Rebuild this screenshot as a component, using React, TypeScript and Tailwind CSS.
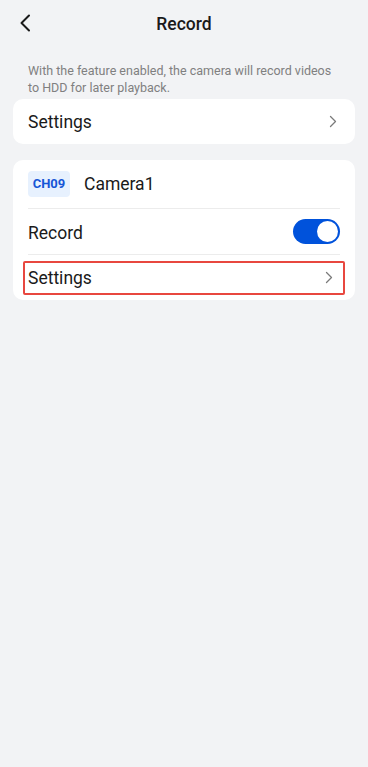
export default function App() {
  return (
    <div
      className="min-h-screen bg-[#f2f3f5] text-[#1a1a1a]"
      style={{ fontFamily: "Roboto, 'Noto Sans', sans-serif" }}
    >
      <div className="relative flex h-[46px] items-center justify-center pt-[3px]">
        <button className="absolute left-[18px] top-[14px] flex h-[18px] w-[14px] items-center justify-center">
          <svg width="12" height="18" viewBox="0 0 12 18" fill="none">
            <path d="M10 1.5 L2.5 9 L10 16.5" stroke="#1a1a1a" strokeWidth="2" strokeLinecap="round" strokeLinejoin="round" />
          </svg>
        </button>
        <h1 className="text-[17.5px] font-medium">Record</h1>
      </div>

      <p className="px-[28px] pt-[17px] text-[12.5px] leading-[16.5px] text-[#808080]">
        With the feature enabled, the camera will record videos to HDD for later playback.
      </p>

      <div className="mx-[13px] mt-[3px] flex h-[45px] items-center justify-between rounded-[10px] bg-white pl-[15px] pr-[18px]">
        <span className="pt-[2px] text-[17.5px]">Settings</span>
        <Chevron />
      </div>

      <div className="mx-[13px] mt-[16px] rounded-[10px] bg-white px-[15px]">
        <div className="flex h-[49px] items-center gap-[14px] border-b border-[#ececec]">
          <span className="flex h-[26px] w-[42px] items-center justify-center rounded-[4px] bg-[#e7f1fe] text-[13px] font-bold text-[#1656d6]">
            CH09
          </span>
          <span className="pt-[1px] text-[17.5px]">Camera1</span>
        </div>
        <div className="flex h-[46px] items-center justify-between border-b border-[#ececec]">
          <span className="pt-[3px] text-[17.5px]">Record</span>
          <div className="flex h-[25px] w-[47px] items-center justify-end rounded-full bg-[#0052db] pr-[2px]">
            <div className="h-[21px] w-[21px] rounded-full bg-white" />
          </div>
        </div>
        <div className="-mx-[5px] flex h-[45px] items-center py-[5px]">
          <div className="flex h-[34px] w-full items-center justify-between rounded-[2px] border-2 border-[#e8473f] pl-[3px] pr-[10px]">
            <span className="pt-[2px] text-[17.5px]">Settings</span>
            <Chevron />
          </div>
        </div>
      </div>
    </div>
  );
}

function Chevron() {
  return (
    <svg width="8" height="13" viewBox="0 0 8 13" fill="none">
      <path d="M1.5 1.5 L6.5 6.5 L1.5 11.5" stroke="#7a7a7a" strokeWidth="1.3" strokeLinecap="round" strokeLinejoin="round" />
    </svg>
  );
}
